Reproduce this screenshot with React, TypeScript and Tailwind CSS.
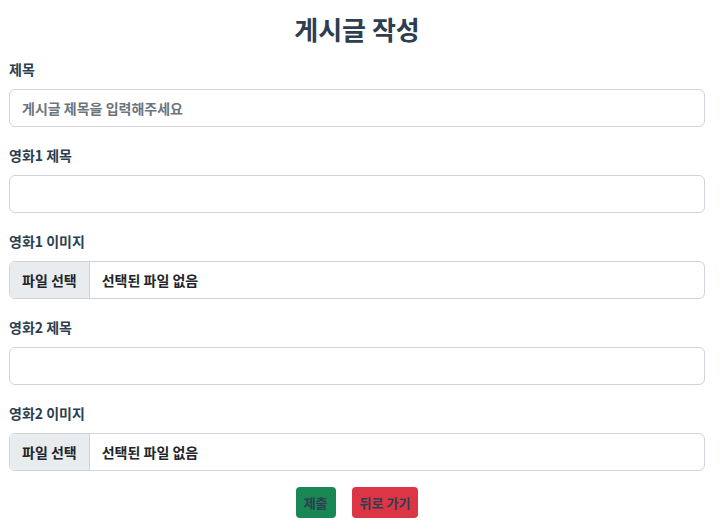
export default function App() {
  const font = "font-['Noto_Sans_CJK_KR','Noto_Sans',sans-serif]"

  const fields = [
    { label: "영화1 제목", type: "text" },
    { label: "영화1 이미지", type: "file" },
    { label: "영화2 제목", type: "text" },
    { label: "영화2 이미지", type: "file" },
  ]

  return (
    <div className={`${font} w-[721px] min-h-[531px] bg-white pl-[9px] pr-[16px] text-[#2c3e50]`}>
      {/* 제목 */}
      <h2 className="pt-[10px] mb-[9px] text-center text-[26px] leading-[38px] font-bold">게시글 작성</h2>

      {/* 게시글 제목 */}
      <div className="mb-4">
        <label className="block mb-2 text-[14px] leading-6 font-bold">제목</label>
        <input
          type="text"
          placeholder="게시글 제목을 입력해주세요"
          className="block w-full h-[38px] px-3 rounded-[6px] border border-[#ced4da] bg-white text-[14px] font-semibold text-[#212529] placeholder:text-[#6c757d] outline-none"
        />
      </div>

      {fields.map((f, i) => (
        <div key={i} className="mb-4">
          <label className="block mb-2 text-[14px] leading-6 font-bold">{f.label}</label>
          {f.type === "text" ? (
            <input
              type="text"
              className="block w-full h-[38px] px-3 rounded-[6px] border border-[#ced4da] bg-white outline-none"
            />
          ) : (
            <div className="flex w-full h-[38px] rounded-[6px] border border-[#ced4da] overflow-hidden text-[14px] font-semibold text-[#212529]">
              <div className="flex items-center px-3 bg-[#e9ecef] border-r border-[#ced4da]">파일 선택</div>
              <div className="flex items-center px-3">선택된 파일 없음</div>
            </div>
          )}
        </div>
      ))}

      {/* 버튼 */}
      <div className="flex justify-center gap-4">
        <button className="h-[31px] px-2 rounded-[4px] bg-[#198754] text-[13px] font-bold text-[#2c3e50]">제출</button>
        <button className="h-[31px] px-2 rounded-[4px] bg-[#dc3545] text-[13px] font-bold text-[#2c3e50]">뒤로 가기</button>
      </div>
    </div>
  )
}
